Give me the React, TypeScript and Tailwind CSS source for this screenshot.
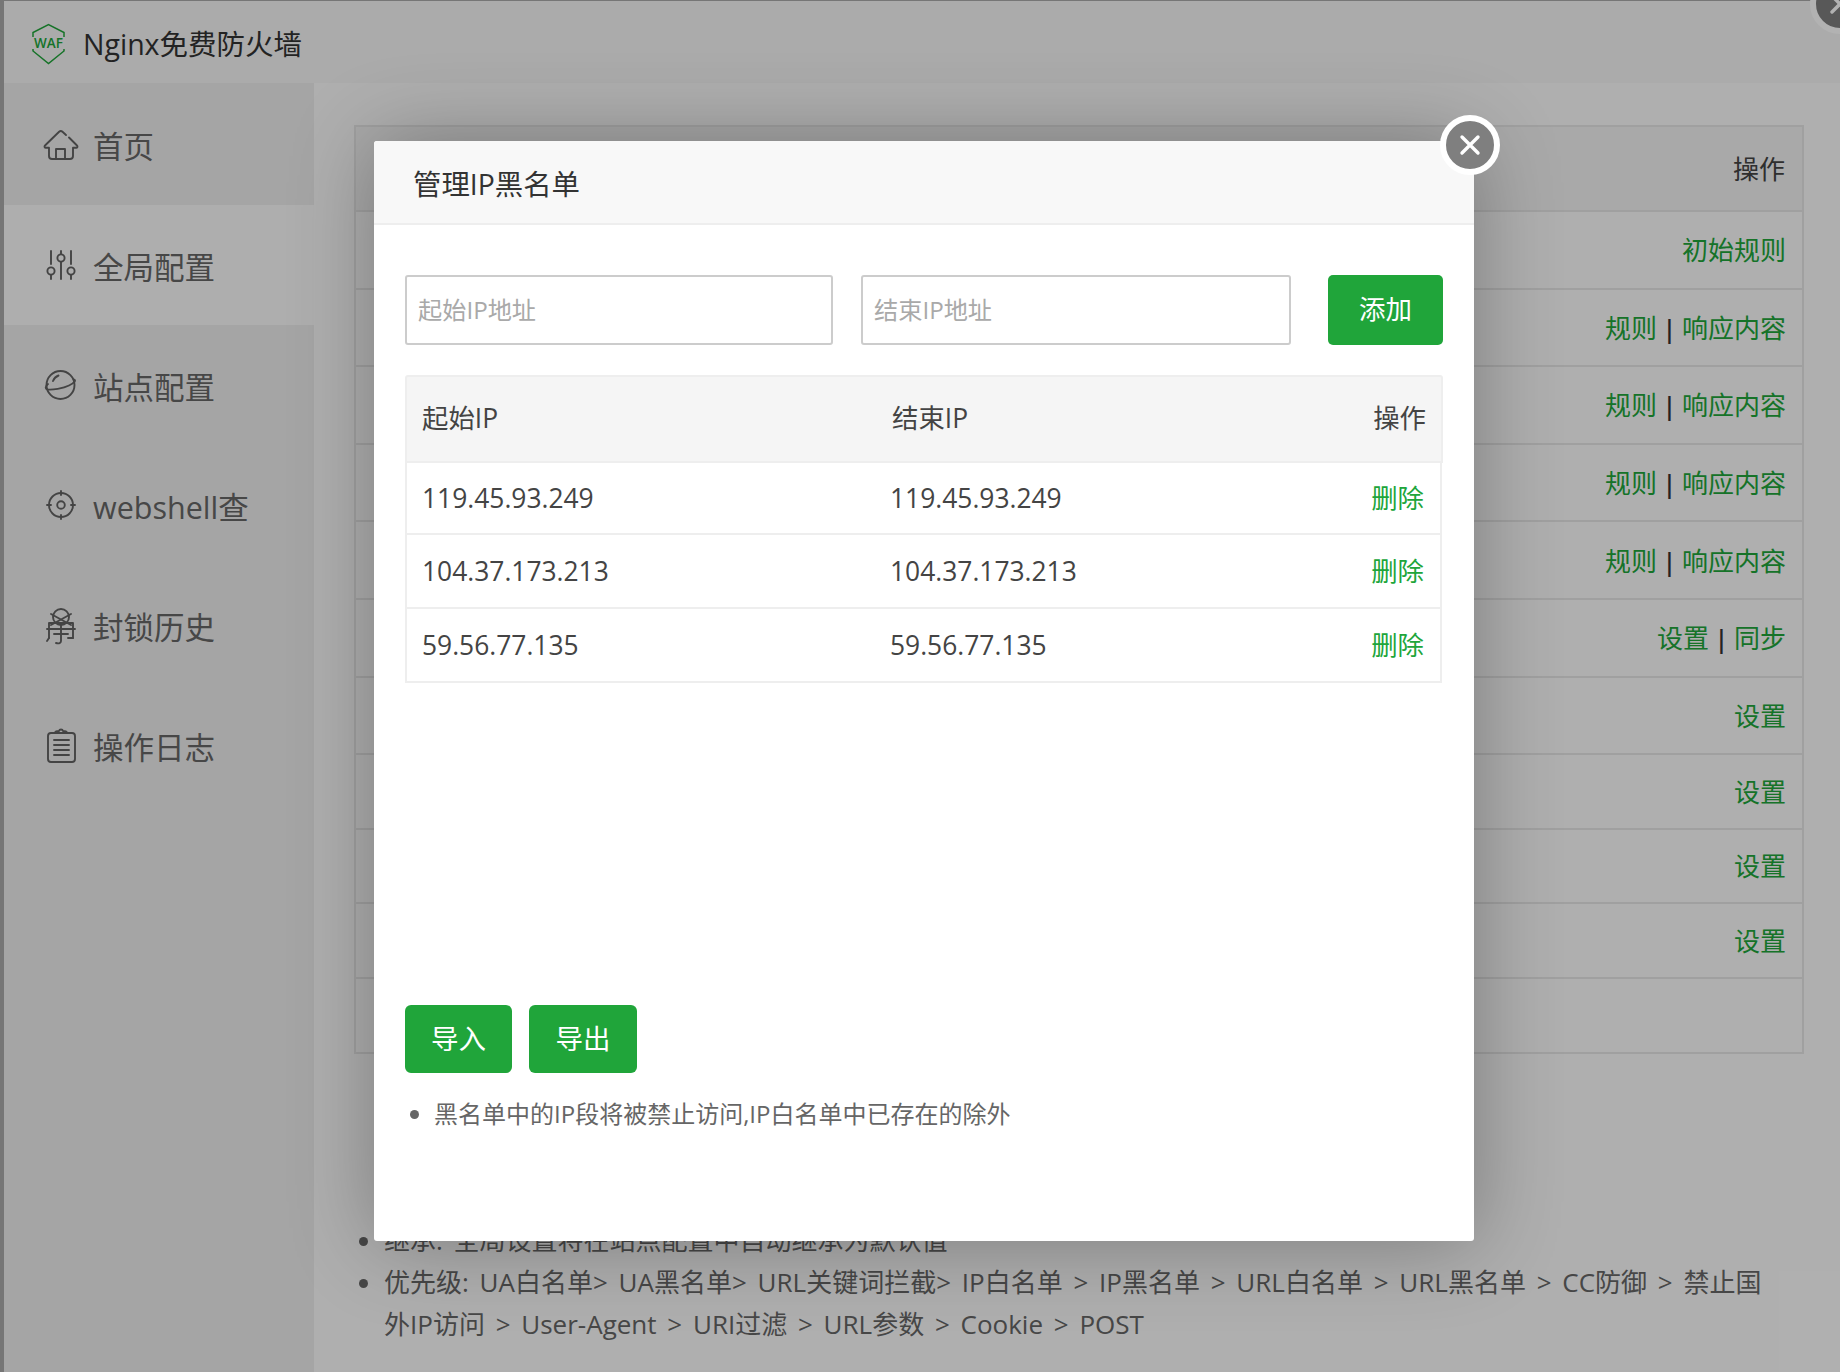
import React from 'react';

const GREEN = 'text-[#20a53a]';

const Rows: { h: string; links: string[] }[] = [
  { h: 'h-[77.6px]', links: ['初始规则'] },
  { h: 'h-[77.6px]', links: ['规则', '响应内容'] },
  { h: 'h-[77.6px]', links: ['规则', '响应内容'] },
  { h: 'h-[77.6px]', links: ['规则', '响应内容'] },
  { h: 'h-[77.6px]', links: ['规则', '响应内容'] },
  { h: 'h-[77.6px]', links: ['设置', '同步'] },
  { h: 'h-[77.6px]', links: ['设置'] },
  { h: 'h-[74.5px]', links: ['设置'] },
  { h: 'h-[74.5px]', links: ['设置'] },
  { h: 'h-[74.5px]', links: ['设置'] },
  { h: 'h-[75px]', links: [] }
];

const blacklist = [
  { ip: '119.45.93.249', h: 'h-[72px]' },
  { ip: '104.37.173.213', h: 'h-[74px]' },
  { ip: '59.56.77.135', h: 'h-[74px]' }
];

const NavIcon: React.FC<{ children: React.ReactNode }> = ({ children }) => (
  <svg viewBox="0 0 50 50" className="w-[50px] h-[50px] shrink-0" fill="none" stroke="#626262" strokeWidth="1.9" strokeLinecap="round" strokeLinejoin="round">
    {children}
  </svg>
);

const navItems: { label: string; active?: boolean; icon: React.ReactNode }[] = [
  {
    label: '首页',
    icon: (
      <g transform="translate(0 2)">
        <path d="M30 14l-3.500-3.200a2.500 2.500 0 0 0-3.400 0L9 24.500a1.300 1.300 0 0 0 1 2.300h3V35a3 3 0 0 0 3 3h18a3 3 0 0 0 3-3v-8.200h3a1.300 1.300 0 0 0 1-2.300L33 16.500" />
        <path d="M20 38V28h9v10" />
      </g>
    )
  },
  {
    label: '全局配置',
    active: true,
    icon: (
      <>
        <path d="M15 11v13M15 35v4M25 11v3M25 22v17M35 11v13M35 35v4" />
        <circle cx="15" cy="31" r="3.600" />
        <circle cx="25" cy="18" r="3.600" />
        <circle cx="35" cy="31" r="3.600" />
      </>
    )
  },
  {
    label: '站点配置',
    icon: (
      <>
        <circle cx="24.500" cy="25" r="14" />
        <path d="M12 24c-3 2.500-3 5 0 5.500 4 .5 15-1 21-4 5-2.500 8-5.500 4.500-6" />
        <path d="M17 21c1-2.500 3-4.500 5.500-5.500" />
      </>
    )
  },
  {
    label: 'webshell查',
    icon: (
      <>
        <circle cx="25" cy="25" r="12" />
        <circle cx="25" cy="25" r="3.800" />
        <path d="M25 11v4M25 35v4M11 25h4M35 25h4" />
      </>
    )
  },
  {
    label: '封锁历史',
    icon: (
      <>
        <circle cx="25" cy="17" r="8" />
        <path d="M15 14l20 11M35 14L15 25" />
        <path d="M13 38V23h24v15" />
        <path d="M11 29h28M18 34h14M25 23v18c0 2-2 3-5 2" />
        <path d="M13 38l-2 3M37 38h-5" />
      </>
    )
  },
  {
    label: '操作日志',
    icon: (
      <g transform="translate(0 2)">
        <rect x="12" y="11" width="27" height="29" rx="3" />
        <path d="M19 11c0-2 3-2 4-2 .5-2 3.500-2 4 0 1 0 4 0 4 2" />
        <path d="M18 18h15M18 23h15M18 28h15M18 33h15" />
      </g>
    )
  }
];

const CloseButton: React.FC<{ className: string }> = ({ className }) => (
  <div className={`absolute w-[60px] h-[60px] rounded-full border-[6px] border-white bg-[#7f7f7f] flex items-center justify-center ${className}`}>
    <svg viewBox="0 0 24 24" className="w-6 h-6" fill="none" stroke="white" strokeWidth="3.400" strokeLinecap="round">
      <path d="M4 4l16 16M20 4L4 20" />
    </svg>
  </div>
);

const Logo = () => (
  <svg viewBox="0 0 38 42" className="w-[38px] h-[42px] shrink-0" fill="none" stroke="#20a53a" strokeWidth="1.500">
    <path d="M3 14V9.500L18.500 1.500 34 9.500V14" />
    <path d="M3 26v2l15.500 12.500L34 28v-2" />
    <text x="18.500" y="25" textAnchor="middle" fontFamily="'Open Sans', sans-serif" fontSize="13.500" fontWeight="600" fill="#20a53a" stroke="none">WAF</text>
  </svg>
);

const App: React.FC = () => {
  return (
    <div className="relative w-full h-[1372px] overflow-hidden bg-[#aaaaaa] font-['Open_Sans','Noto_Sans_CJK_SC',sans-serif]">
      {/* Page behind the dialog */}
      <div className="ml-1 mt-px h-[1371px] bg-white flex flex-col overflow-hidden">
        <header className="h-[82px] shrink-0 bg-[#f5f5f5] flex items-center pl-[26px] pt-1 gap-[15px]">
          <Logo />
          <span className="text-[28.5px] text-[#333] whitespace-nowrap">Nginx免费防火墙</span>
        </header>

        <div className="flex flex-1 min-h-0">
          <aside className="w-[310px] shrink-0 bg-[#ededed]">
            {navItems.map((item, i) => (
              <div
                key={item.label}
                className={`flex items-center pl-8 gap-[7px] ${i === 0 ? 'h-[122px]' : 'h-[120px]'} ${item.active ? 'bg-[#f9f9f9]' : ''}`}
              >
                <NavIcon>{item.icon}</NavIcon>
                <span className="text-[30.5px] text-[#666] whitespace-nowrap pt-[6px]">{item.label}</span>
              </div>
            ))}
          </aside>

          <main className="flex-1 min-w-0 bg-[#fbfbfb] pl-10 pr-[36px] pt-[42px]">
            <div className="border-2 border-[#e6e6e6] text-[26px]">
              <div className="h-[83px] bg-[#f2f2f2] flex items-center justify-end pt-[2px] pr-[17px] text-[#444]">
                <span>操作</span>
              </div>
              {Rows.map((row, i) => (
                <div key={i} className={`${row.h} border-t-2 border-[#e6e6e6] flex items-center justify-end pt-[2px] pr-[16px]`}>
                  <span className="whitespace-nowrap text-[#333]">
                    {row.links.map((link, j) => (
                      <span key={link}>
                        {j > 0 && <span className="inline-block w-[25px] text-center font-semibold">|</span>}
                        <a className={GREEN}>{link}</a>
                      </span>
                    ))}
                  </span>
                </div>
              ))}
            </div>

            <ul className="list-disc mt-[165px] ml-[30px] w-[1392px] text-[26px] leading-[42px] text-[#666] [word-spacing:4px]">
              <li>继承: 全局设置将在站点配置中自动继承为默认值</li>
              <li>优先级: UA白名单&gt; UA黑名单&gt; URL关键词拦截&gt; IP白名单 &gt; IP黑名单 &gt; URL白名单 &gt; URL黑名单 &gt; CC防御 &gt; 禁止国外IP访问 &gt; User-Agent &gt; URI过滤 &gt; URL参数 &gt; Cookie &gt; POST</li>
            </ul>
          </main>
        </div>
      </div>

      <CloseButton className="right-[-30px] top-[-26px]" />

      {/* Shade */}
      <div className="absolute inset-0 bg-black/30" />

      {/* Dialog */}
      <div className="absolute left-[374px] top-[141px] w-[1100px] h-[1100px] bg-white rounded-[3px] shadow-[1px_1px_85px_rgba(0,0,0,0.3)] flex flex-col">
        <div className="h-[84px] shrink-0 bg-[#f8f8f8] border-b-2 border-[#eeeeee] rounded-t-[3px] flex items-center pl-[39px] pt-1 text-[28.4px] text-[#333]">
          管理IP黑名单
        </div>

        <div className="flex-1 px-[31px] pt-[50px]">
          <div className="flex items-stretch h-[70px]">
            <input
              placeholder="起始IP地址"
              className="w-[428px] border-2 border-[#cccccc] rounded-[3px] px-[11px] text-[24.2px] placeholder:text-[#a9a9a9] outline-none"
            />
            <input
              placeholder="结束IP地址"
              className="w-[430px] ml-[28px] border-2 border-[#cccccc] rounded-[3px] px-[11px] text-[24.2px] placeholder:text-[#a9a9a9] outline-none"
            />
            <button className="w-[115px] ml-[37px] bg-[#20a53a] rounded-[5px] text-white text-[26.5px]">添加</button>
          </div>

          <div className="mt-[30px] text-[26.4px] text-[#444]">
            <div className="h-[88px] bg-[#f5f5f5] border-2 border-[#eeeeee] rounded-t-[3px] flex items-center pl-[15px] pr-[15px]">
              <span className="w-[470px]">起始IP</span>
              <span className="flex-1">结束IP</span>
              <span>操作</span>
            </div>
            <div className="w-[1037px] border-x-2 border-[#eeeeee]">
              {blacklist.map(row => (
                <div key={row.ip} className={`${row.h} border-b-2 border-[#eeeeee] flex items-center pl-[15px] pr-[16px] pt-[2px]`}>
                  <span className="w-[468px]">{row.ip}</span>
                  <span className="flex-1">{row.ip}</span>
                  <a className={GREEN}>删除</a>
                </div>
              ))}
            </div>
          </div>

          <div className="flex gap-[17px] mt-[322px]">
            <button className="w-[107px] h-[68px] bg-[#20a53a] rounded-[6px] text-white text-[27.5px]">导入</button>
            <button className="w-[108px] h-[68px] bg-[#20a53a] rounded-[6px] text-white text-[27.5px]">导出</button>
          </div>

          <ul className="list-disc ml-[29px] mt-[22px] text-[24px] leading-[38px] text-[#666]">
            <li>黑名单中的IP段将被禁止访问,IP白名单中已存在的除外</li>
          </ul>
        </div>

        <CloseButton className="right-[-26px] top-[-26px]" />
      </div>
    </div>
  );
};

export default App;
